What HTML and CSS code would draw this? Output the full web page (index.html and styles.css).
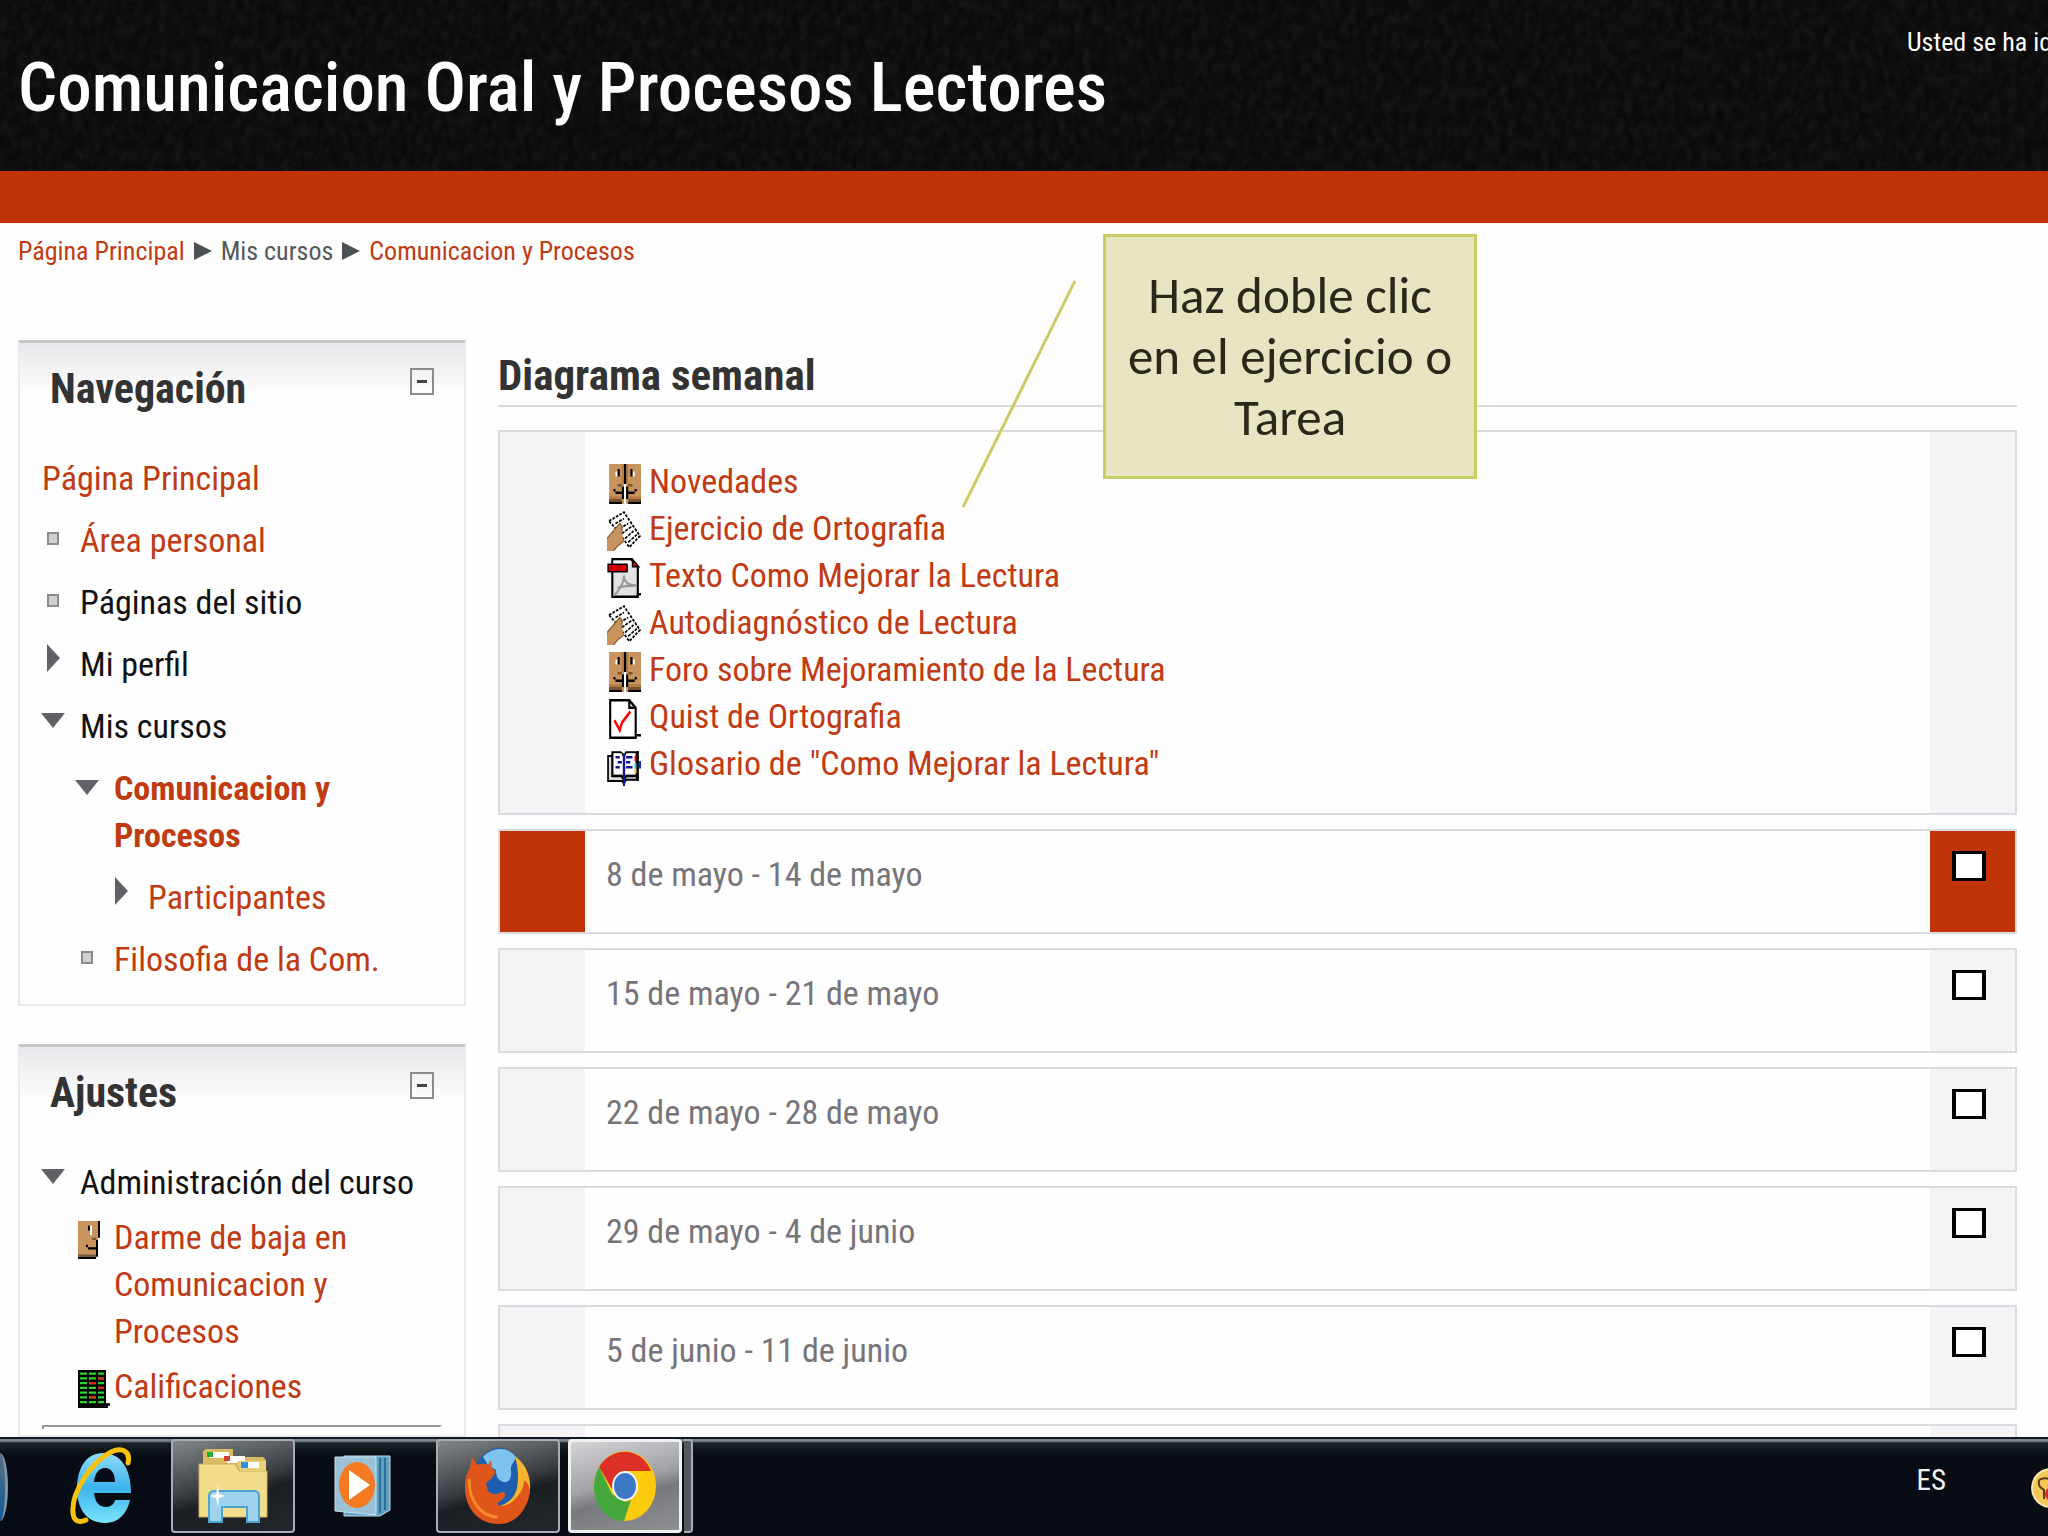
FILE: index.html
```html
<!DOCTYPE html>
<html lang="es">
<head>
    <meta charset="UTF-8">
    <title>Comunicacion Oral y Procesos Lectores</title>
    <link rel="stylesheet" href="styles.css">
</head>
<body>
    <!-- shared icons -->
    <svg class="sprite" aria-hidden="true">
        <symbol id="icon-forum" viewBox="0 0 16 16" preserveAspectRatio="none">
            <path fill="#c8935c" d="M1 0h15v16H1z"/>
            <path fill="#b07c48" d="M7 0h1v8H7zM9 0h1v8H9zM1 13h6v1H1zM10 13h6v1h-6z"/>
            <path fill="#fff" d="M8 8h1v8H8zM4 3h1v2H4zM12 3h1v2h-1z"/>
            <path fill="#000" d="M8 0h1v8H8zM7 9h1v5H7zM9 9h1v5H9zM1 15h6v1H1zM10 15h6v1h-6zM5 2h1v3H5zM11 2h1v3h-1zM3 10h1v1H3zM4 11h3v1H4zM13 10h1v1h-1zM10 11h3v1h-3z"/>
            <path fill="#7c5430" d="M1 14h6v1H1zM10 14h6v1h-6zM5 8h2v1H5zM10 8h2v1h-2z"/>
        </symbol>
        <symbol id="icon-task" viewBox="0 0 16 16" preserveAspectRatio="none">
            <path fill="#fff" stroke="#000" stroke-width="0.8" stroke-dasharray="1.2 0.6" d="M1 4L8 0.5L15.5 10L10.5 14.5L5 8z"/>
            <path fill="none" stroke="#000" stroke-width="0.7" stroke-dasharray="1.4 0.5" d="M4 5l4-2M6 7l4-2M7 9l5-3M8.500 11l4-3M10 12.500l4-3"/>
            <path fill="#c8935c" d="M0 11l3-3 3-3 1 1v3l1 3-3 2-2 2H0z"/>
            <path fill="none" stroke="#8c6238" stroke-width="0.6" d="M0 11l3-3 3-3 1 1v3M8 12l-3 2-2 2"/>
        </symbol>
        <symbol id="icon-pdf" viewBox="0 0 16 16" preserveAspectRatio="none">
            <path fill="#e2e2e2" stroke="#000" d="M2.500 0.500h9l3 3v12h-12z"/>
            <path fill="#fff" d="M3 1h8v2H3z"/>
            <path fill="#d00000" stroke="#000" stroke-width="0.6" d="M0.500 2.500h9v3h-9zM12 0.500v3h3z"/>
            <path fill="none" stroke="#9a9a9a" d="M3 15c2-1 5-5 5-8 0 3 3 4 6 4M5 12c3-1 6-1 9-1"/>
            <path fill="#000" d="M14 14h2v1h-2z"/>
        </symbol>
        <symbol id="icon-quiz" viewBox="0 0 16 16" preserveAspectRatio="none">
            <path fill="#fff" stroke="#000" d="M1.500 0.500h9l3 3v12h-12z"/>
            <path fill="none" stroke="#000" d="M10.500 0.500v3h3M14 14.500h2"/>
            <path fill="none" stroke="#f00" stroke-width="1.100" d="M3.500 8.500l2.500 4 1-3 4-4.500"/>
        </symbol>
        <symbol id="icon-glossary" viewBox="0 0 16 16" preserveAspectRatio="none">
            <path fill="#ddd" stroke="#000" stroke-width="0.8" d="M0.500 4h2V2.500h4L8 4l1-1.500h5v11H9L8 15l-1-1H0.500z"/>
            <path fill="#fff" d="M3 3h4v8H3zM9 3h4v8H9z"/>
            <path fill="none" stroke="#000" d="M2.500 3v9h4.500l1 2 1-2h5V3"/>
            <path fill="none" stroke="#11119c" d="M4 4.500h2M5 6.500h2M4 8.500h2M9 4.500h3M9 6.500h2M9 8.500h3M8 3v13"/>
            <path fill="#d00" d="M13 4h1v2h-1z"/>
            <path fill="#18d0e0" d="M13 7h1v2h-1z"/>
            <path fill="#e8d020" d="M13 9h1v2h-1z"/>
            <path fill="#000" d="M14 2h1v12h-1z"/>
            <path fill="#2020c0" d="M15 6h1v3h-1z"/>
        </symbol>
    </svg>

    <header class="header">
        <svg class="grain" aria-hidden="true">
            <filter id="noise">
                <feTurbulence type="fractalNoise" baseFrequency="0.12 0.08" numOctaves="3"/>
                <feColorMatrix values="0 0 0 0 0.12  0 0 0 0 0.12  0 0 0 0 0.12  1.6 0 0 0 -0.5"/>
            </filter>
            <rect width="100%" height="100%" filter="url(#noise)"/>
        </svg>
        <h1>Comunicacion Oral y Procesos Lectores</h1>
        <div class="login-info">Usted se ha identificado</div>
    </header>
    <div class="menu-bar"></div>

    <div class="page">
        <nav class="breadcrumb">
            <a href="#">Página Principal</a>
            <span class="sep"></span>
            <span>Mis cursos</span>
            <span class="sep"></span>
            <a href="#">Comunicacion y Procesos</a>
        </nav>

        <div class="columns">
            <aside class="sidebar">
                <section class="block">
                    <div class="block-header">
                        <h2>Navegación</h2>
                        <button class="toggle" aria-label="Ocultar Navegación"></button>
                    </div>
                    <ul class="tree">
                        <li class="root"><a href="#">Página Principal</a></li>
                        <li class="leaf"><a href="#">Área personal</a></li>
                        <li class="leaf">Páginas del sitio</li>
                        <li class="closed">Mi perfil</li>
                        <li class="open">Mis cursos
                            <ul>
                                <li class="open"><a href="#" class="current">Comunicacion y Procesos</a>
                                    <ul>
                                        <li class="closed"><a href="#">Participantes</a></li>
                                    </ul>
                                </li>
                                <li class="leaf"><a href="#">Filosofia de la Com.</a></li>
                            </ul>
                        </li>
                    </ul>
                </section>

                <section class="block">
                    <div class="block-header">
                        <h2>Ajustes</h2>
                        <button class="toggle" aria-label="Ocultar Ajustes"></button>
                    </div>
                    <ul class="tree">
                        <li class="open">Administración del curso
                            <ul class="admin">
                                <li>
                                    <svg class="admin-icon" viewBox="0 0 16 16" preserveAspectRatio="none">
                                        <path fill="#c8935c" d="M0 0h10v8H9v6H0z"/>
                                        <path fill="#7c5430" d="M0 14h9v1H0zM7 7h2v1H7z"/>
                                        <path fill="#fff" d="M6 2h1v4H6z"/>
                                        <path fill="#000" d="M0 15h9v1H0zM9 8h1v7H9zM10 0h1v7h-1zM4 10h1v1H4zM5 11h4v1H5zM5 2h1v2H5z"/>
                                    </svg>
                                    <a href="#">Darme de baja en Comunicacion y Procesos</a>
                                </li>
                                <li>
                                    <svg class="admin-icon" viewBox="0 0 16 16" preserveAspectRatio="none">
                                        <path fill="#000" d="M0 0h14v14h2v1h-1v1H0z"/>
                                        <path fill="none" stroke="#2bd42b" stroke-dasharray="3.500 1" d="M1 1.500h12M1 3.500h12M1 5.500h12M1 7.500h12M1 9.500h12M1 11.500h12M1 13.500h12"/>
                                        <path fill="#d22" d="M10 3h3v1h-3zM6 5h3v1H6zM10 7h3v1h-3zM6 11h3v1H6z"/>
                                    </svg>
                                    <a href="#">Calificaciones</a>
                                </li>
                            </ul>
                        </li>
                    </ul>
                    <hr>
                </section>
            </aside>

            <main class="content">
                <h2>Diagrama semanal</h2>

                <section class="week general">
                    <ul class="activities">
                        <li><a href="#"><svg><use href="#icon-forum"/></svg>Novedades</a></li>
                        <li><a href="#"><svg><use href="#icon-task"/></svg>Ejercicio de Ortografia</a></li>
                        <li><a href="#"><svg><use href="#icon-pdf"/></svg>Texto Como Mejorar la Lectura</a></li>
                        <li><a href="#"><svg><use href="#icon-task"/></svg>Autodiagnóstico de Lectura</a></li>
                        <li><a href="#"><svg><use href="#icon-forum"/></svg>Foro sobre Mejoramiento de la Lectura</a></li>
                        <li><a href="#"><svg><use href="#icon-quiz"/></svg>Quist de Ortografia</a></li>
                        <li><a href="#"><svg><use href="#icon-glossary"/></svg>Glosario de "Como Mejorar la Lectura"</a></li>
                    </ul>
                    <div class="side"></div>
                </section>

                <section class="week current-week">
                    <h3><label for="week-1">8 de mayo - 14 de mayo</label></h3>
                    <div class="side"><input type="checkbox" id="week-1"></div>
                </section>
                <section class="week">
                    <h3><label for="week-2">15 de mayo - 21 de mayo</label></h3>
                    <div class="side"><input type="checkbox" id="week-2"></div>
                </section>
                <section class="week">
                    <h3><label for="week-3">22 de mayo - 28 de mayo</label></h3>
                    <div class="side"><input type="checkbox" id="week-3"></div>
                </section>
                <section class="week">
                    <h3><label for="week-4">29 de mayo - 4 de junio</label></h3>
                    <div class="side"><input type="checkbox" id="week-4"></div>
                </section>
                <section class="week">
                    <h3><label for="week-5">5 de junio - 11 de junio</label></h3>
                    <div class="side"><input type="checkbox" id="week-5"></div>
                </section>
                <section class="week">
                    <h3></h3>
                    <div class="side"></div>
                </section>

                <svg class="pointer" viewBox="0 0 114 228"><path d="M113 1L1 227" stroke="#cccc66" stroke-width="3"/></svg>
                <div class="callout">Haz doble clic en el ejercicio o Tarea</div>
            </main>
        </div>
    </div>

    <footer class="taskbar">
        <span class="start-orb"></span>
        <button class="task" aria-label="Internet Explorer">
            <svg width="66" height="78" viewBox="0 0 66 78" preserveAspectRatio="none">
                <defs>
                    <linearGradient id="ie" x1="0" y1="0" x2="0" y2="1">
                        <stop offset="0" stop-color="#8fdcfa"/><stop offset="0.5" stop-color="#3cb4ee"/><stop offset="1" stop-color="#7be4fc"/>
                    </linearGradient>
                </defs>
                <path fill="url(#ie)" fill-rule="evenodd" d="M34 6C50 6 62 19 62 46H25c1 9 5 14 12 14 5 0 8-3 9-7h15C58 67 49 76 36 76 18 76 8 62 8 42 8 20 18 6 34 6zM25 35h21c0-9-4-14-10-14s-10 5-11 14z"/>
                <path fill="none" stroke="#f9c20c" stroke-width="5" stroke-linecap="round" d="M59 16C62 4 53 0 42 5 22 15 2 46 4 66c1 9 7 10 13 7"/>
            </svg>
        </button>
        <button class="task running" aria-label="Explorador de Windows">
            <svg width="70" height="74" viewBox="0 0 70 74" preserveAspectRatio="none">
                <path fill="#d9bc62" d="M5 16V2l3-2h27v8h30l3 3v20H2V16z"/>
                <path fill="#fff" d="M12 3h19v6H12zM29 7h18v7H29z"/>
                <path fill="#18b030" d="M9 3h6v5H9z"/>
                <path fill="#d04030" d="M26 7h6v5h-6z"/>
                <path fill="#f1dd8c" stroke="#cdb058" d="M1 15h36l4 7h28v46H1z"/>
                <path fill="#e8cf78" d="M39 12h29v10H42z"/>
                <path fill="#fff" d="M46 13h15v6H46z"/>
                <path fill="#2a8fe8" d="M43 13h7v6h-7z"/>
                <path fill="#9fd4ef" stroke="#4fa3d0" stroke-width="2" d="M11 73V47q0-5 5-5h40q5 0 5 5v26H49V58H24v15z"/>
                <path fill="#fff" d="M20 36l1 9 6 2-6 2-1 9-2-9-6-2 6-2z"/>
            </svg>
        </button>
        <button class="task" aria-label="Reproductor de Windows Media">
            <svg width="58" height="62" viewBox="0 0 58 62" preserveAspectRatio="none">
                <path fill="#5f9fc2" stroke="#b6dcee" d="M10 1h46v54l-10 6H10z"/>
                <path fill="none" stroke="#2f6f96" stroke-width="2" d="M46 3v55M51 3v52"/>
                <path fill="#9cc0d6" stroke="#c4e2f0" d="M1 2h41v58L1 56z"/>
                <ellipse cx="23" cy="30" rx="18" ry="23" fill="#f57a22"/>
                <path fill="#fff" d="M15 15l21 15-21 15z"/>
            </svg>
        </button>
        <button class="task running" aria-label="Firefox">
            <svg width="68" height="78" viewBox="0 0 68 78" preserveAspectRatio="none">
                <ellipse cx="35" cy="33" rx="25" ry="32" fill="#1d5fae"/>
                <path fill="#7cc4ee" d="M19 10C28 0 44-1 52 10c-2 6-6 8-5 14 1 7-2 12-7 11-6-1-8-6-8-12l-8-5z"/>
                <path fill="#f6b52c" d="M51 9c12 9 16 22 15 34-2 16-12 28-24 32l-6-16c9-3 15-9 17-18 2-11 1-20-2-32z"/>
                <path fill="#e0561a" d="M8 10l5 8c5-2 8-1 11 0l3-5 1 8 4 4-5 7-5 4 2 8c5 5 10 3 14 1 3 0 4 2 3 4-3 5-6 5-8 8 4 4 13 1 18-5 6-6 9-12 9-19 5 4 6 8 6 12-3 19-15 32-31 32C13 77 1 60 1 40c0-9 2-14 5-19z"/>
                <path fill="none" stroke="#f58a28" stroke-width="3" d="M5 32c0 22 12 38 29 38"/>
            </svg>
        </button>
        <button class="task running active" aria-label="Google Chrome">
            <svg width="62" height="70" viewBox="0 0 62 70" preserveAspectRatio="none">
                <ellipse cx="31" cy="35" rx="31" ry="35" fill="#fccb0c"/>
                <path fill="#dd3127" d="M5 16C17-5 48-5 57 20H31L18 38z"/>
                <path fill="#45a83c" d="M5 16l13 27 13 8 6-2-7 21C3 69-7 38 5 16z"/>
                <ellipse cx="31" cy="35" rx="13" ry="15" fill="#f4f6fa"/>
                <ellipse cx="31" cy="35" rx="11" ry="13" fill="#3c78c3"/>
            </svg>
        </button>
        <span class="stacked"></span>
        <span class="language">ES</span>
        <svg class="tray-icon" viewBox="0 0 40 40">
            <circle cx="20" cy="20" r="19" fill="#f6c85a" stroke="#fae6b0" stroke-width="2"/>
            <path fill="none" stroke="#5a3c10" stroke-width="2" d="M8 12c6-4 10 0 14-1M8 12c-1 8 3 8 5 10v9M22 11c0 4-3 6-5 7"/>
            <circle cx="21" cy="26" r="7" fill="#d8262c"/>
        </svg>
    </footer>
</body>
</html>
```

FILE: styles.css
```css
:root {
    --orange: #bf3306;
    --link: #c03a12;
    --border: #dcdade;
    --side: #f5f3f6;
    --text: #111111;
}

*,
*::before {
    margin: 0;
    padding: 0;
    box-sizing: border-box;
}

body {
    display: flex;
    flex-direction: column;
    height: 100vh;
    overflow: hidden;
    background-color: #fefefe;
    color: var(--text);
    font-family: "Roboto Condensed", "Liberation Sans Narrow", Lato, sans-serif;
    font-size: 34px;
    line-height: 47px;
}

a {
    color: var(--link);
    text-decoration: none;
}

ul {
    list-style: none;
}

button {
    border: none;
    background: none;
    cursor: pointer;
}

.sprite {
    display: none;
}

/* header */
.header {
    position: relative;
    flex: none;
    display: flex;
    justify-content: space-between;
    height: 171px;
    padding-left: 18px;
    background-color: #0b0b0b;
    color: white;
    overflow: hidden;
}

.grain {
    position: absolute;
    inset: 0;
    width: 100%;
    height: 100%;
    opacity: 0.15;
}

.header h1 {
    position: relative;
    padding-top: 48px;
    font-size: 69px;
    font-weight: 500;
    line-height: 80px;
    white-space: nowrap;
}

.login-info {
    position: relative;
    width: 141px;
    padding-top: 24px;
    font-size: 26px;
    line-height: 36px;
    white-space: nowrap;
}

.menu-bar {
    flex: none;
    height: 52px;
    background-color: var(--orange);
}

/* page */
.page {
    flex: 1;
    min-height: 0;
    padding: 10px 31px 0 18px;
    overflow: hidden;
}

.breadcrumb {
    display: flex;
    align-items: center;
    gap: 9px;
    height: 36px;
    color: #54595c;
    font-size: 26px;
    line-height: 36px;
}

.sep {
    border-left: 18px solid #4c5154;
    border-top: 9px solid transparent;
    border-bottom: 9px solid transparent;
}

.columns {
    display: flex;
    align-items: flex-start;
    gap: 32px;
    margin-top: 71px;
}

/* sidebar */
.sidebar {
    flex: 0 0 448px;
}

.block {
    margin-bottom: 38px;
    padding: 0 22px 6px;
    border: 2px solid #ebe9ed;
    border-top: 3px solid #c8c6ca;
    background: linear-gradient(#e8e6ea, #fefefe 54px);
}

.block-header {
    display: flex;
    justify-content: space-between;
    padding: 21px 8px 41px;
}

.block-header h2 {
    font-size: 42px;
    line-height: 50px;
    color: #333333;
}

.toggle {
    display: flex;
    align-items: center;
    justify-content: center;
    width: 24px;
    height: 27px;
    margin-top: 4px;
    border: 2px solid #8c8c90;
}

.toggle::before {
    content: "";
    width: 10px;
    height: 3px;
    background-color: #444444;
}

.tree li {
    position: relative;
    margin-bottom: 15px;
    padding-left: 38px;
}

.tree li.root {
    padding-left: 0;
}

.tree ul {
    margin-top: 15px;
}

.tree ul li {
    padding-left: 34px;
}

.tree .leaf::before,
.tree .open::before,
.tree .closed::before {
    content: "";
    position: absolute;
}

.tree .leaf::before {
    top: 15px;
    left: 5px;
    width: 12px;
    height: 13px;
    border: 2px solid #8c8c90;
    background-color: #d0d0d2;
}

.tree .closed::before {
    top: 3px;
    left: 5px;
    border-left: 13px solid #636167;
    border-top: 14px solid transparent;
    border-bottom: 14px solid transparent;
}

.tree .open::before {
    top: 10px;
    left: -1px;
    border-top: 15px solid #636167;
    border-left: 12px solid transparent;
    border-right: 12px solid transparent;
}

.tree .open .open::before {
    top: 15px;
    left: -5px;
}

.tree .open .leaf::before,
.tree .open .closed::before {
    left: 1px;
}

.current {
    display: block;
    max-width: 240px;
    font-weight: 700;
}

.tree .admin {
    margin-top: 8px;
}

.tree .admin li {
    display: flex;
    margin-bottom: 8px;
    padding-left: 0;
}

.admin a {
    max-width: 290px;
}

.admin-icon {
    flex: none;
    width: 32px;
    height: 38px;
    margin: 7px 4px 0 -2px;
}

.block hr {
    height: 4px;
    margin-top: 11px;
    border: 2px solid #9a989c;
    border-right-color: transparent;
    border-bottom: none;
}

/* course content */
.content {
    position: relative;
    flex: 1;
    min-width: 0;
}

.content h2 {
    margin-bottom: 23px;
    padding: 11px 0 6px;
    border-bottom: 2px solid var(--border);
    color: #333333;
    font-size: 43px;
    line-height: 48px;
}

.week {
    display: flex;
    justify-content: space-between;
    min-height: 105px;
    margin-bottom: 14px;
    border: 2px solid var(--border);
    border-left: 87px solid var(--side);
    outline: 2px solid var(--border);
    outline-offset: -2px;
}

.week h3 {
    padding: 20px 0 0 21px;
    color: #77757a;
    font-size: 34px;
    font-weight: 400;
}

.side {
    flex: none;
    width: 85px;
    background-color: var(--side);
    text-align: center;
}

.side input {
    appearance: none;
    width: 34px;
    height: 30px;
    margin-top: 20px;
    margin-right: 8px;
    border: 4px solid black;
    border-width: 3px 4px;
    background-color: white;
}

.general {
    min-height: 385px;
}

.current-week {
    border-left-color: var(--orange);
}

.current-week .side {
    background-color: var(--orange);
}

.activities {
    padding: 26px 0 0 22px;
}

.activities a {
    display: flex;
    align-items: center;
    gap: 8px;
}

.activities svg {
    width: 34px;
    height: 40px;
    margin-top: 4px;
}

.pointer {
    position: absolute;
    top: -60px;
    left: 464px;
    width: 114px;
    height: 228px;
}

.callout {
    position: absolute;
    top: -106px;
    left: 605px;
    width: 374px;
    height: 245px;
    padding: 28px 18px;
    border: 3px solid #cccc66;
    background-color: #e7e4c2;
    color: #2a2818;
    font-family: Carlito, "Open Sans", "Noto Sans", sans-serif;
    font-size: 51px;
    line-height: 61px;
    text-align: center;
}

/* taskbar */
.taskbar {
    position: relative;
    flex: none;
    display: flex;
    align-items: flex-start;
    height: 99px;
    border-top: 2px solid #111820;
    background: linear-gradient(#7d858b 0, #7d858b 2px, #1a2428 4px, #080c14 16px, #070b13);
    overflow: hidden;
}

.start-orb {
    width: 8px;
    height: 68px;
    margin-top: 14px;
    border-right: 3px solid #7895aa;
    border-radius: 0 8px 8px 0 / 0 34px 34px 0;
    background: linear-gradient(#5b7183, #0f5a93);
}

.task {
    display: flex;
    align-items: center;
    justify-content: center;
    width: 124px;
    height: 94px;
}

.task:first-of-type {
    width: 163px;
    padding-left: 25px;
}

.running {
    border: 2px solid #a9adb1;
    border-radius: 4px;
    background: linear-gradient(165deg, #84878a, #3c3f43 45%, #1b1f24 60%, #24272c);
}

.task:nth-of-type(3) {
    width: 141px;
    padding-right: 6px;
}

.active {
    width: 114px;
    margin-left: 8px;
    border: 3px solid #f0f0f2;
    background: linear-gradient(165deg, #d4d5d7, #a0a2a5 45%, #77797c 60%, #8e9093);
}

.stacked {
    width: 9px;
    height: 94px;
    margin-left: 2px;
    border: 2px solid #a9adb1;
    border-left: none;
    border-radius: 0 4px 4px 0;
    background-color: #55585c;
}

.language {
    margin: 18px 85px 0 auto;
    color: #f2f2f2;
    font-size: 29px;
}

.tray-icon {
    flex: none;
    width: 40px;
    height: 40px;
    margin: 29px -23px 0 0;
}
```
